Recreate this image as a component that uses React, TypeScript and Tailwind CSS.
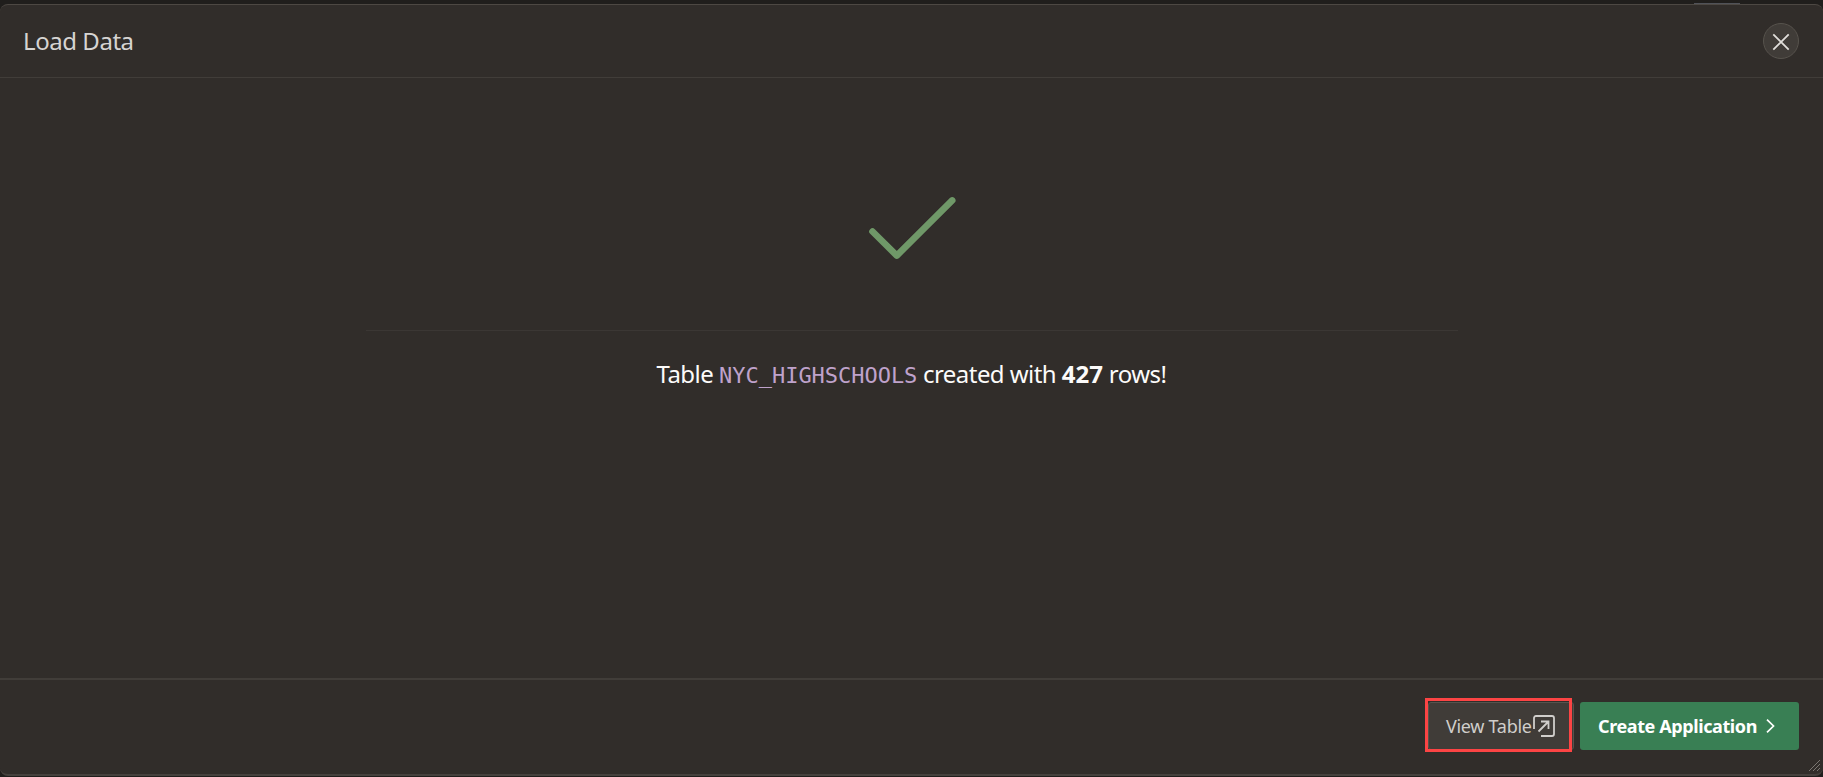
export default function App() {
  return (
    <div className="relative h-[777px] w-[1823px] overflow-hidden bg-[#201e1c] pt-1 pb-px font-['Noto_Sans',sans-serif]">
      <div className="absolute top-[3px] left-[1694px] h-px w-[46px] bg-[#505258]" />
      <section className="flex h-[772px] flex-col overflow-hidden rounded-lg border-t border-b-2 border-t-[#4d4843] border-b-[#45413d] bg-[#312d2a]">
        <header className="flex h-[73px] shrink-0 items-center justify-between border-b border-[#413d39] pr-6 pl-[23px]">
          <h1 className="text-[24px] leading-8 tracking-[-0.45px] text-[#d6d4d2]">Load Data</h1>
          <button className="flex size-9 items-center justify-center rounded-full border border-[#57534d] bg-[#403c38]" aria-label="Close">
            <svg className="translate-y-px" width="18" height="18" viewBox="0 0 18 18" fill="none" stroke="#e0deda" strokeWidth="1.8">
              <path d="M1.3 1.3l15.4 15.4M16.7 1.3l-15.4 15.4" />
            </svg>
          </button>
        </header>
        <main className="flex flex-1 flex-col items-center">
          <svg className="mt-[104px] shrink-0" width="96" height="96" viewBox="864 182 96 96" fill="none" stroke="#6f9868" strokeWidth="6.6" strokeLinecap="round" strokeLinejoin="round">
            <path d="M872.5 231.5L896.8 255.6L952.2 200.4" />
          </svg>
          <div className="mt-[52px] h-px w-[1092px] shrink-0 bg-[#3b3734]" />
          <p className="mt-[27px] flex text-[24px] leading-8 whitespace-pre text-[#fcfbfa]">
            <span className="tracking-[-0.5px]">Table </span>
            <span className="pt-[2px] font-['DejaVu_Sans_Mono',monospace] text-[22px] tracking-[-0.03px] text-[#bfa2cb]">NYC_HIGHSCHOOLS</span>
            <span className="tracking-[-0.55px]"> created with </span>
            <strong>427</strong>
            <span className="tracking-[-0.5px]"> rows!</span>
          </p>
        </main>
        <footer className="relative flex h-[96px] shrink-0 items-start justify-end gap-[6px] border-t-2 border-[#413d39] pt-[22px] pr-6">
          <button className="relative flex h-12 w-[146px] items-center rounded-[3px] border border-[#57534d] bg-[#403c38] pl-[17px] text-left text-[18px] text-[#d0cecb]">
            <span className="w-[87px] shrink-0 tracking-[-0.3px] whitespace-nowrap">View Table</span>
            <svg className="shrink-0" width="22" height="22" viewBox="0 0 22 22" fill="none" stroke="#d0cecb" strokeWidth="1.8">
              <path d="M1 14V3a2 2 0 0 1 2-2h16a2 2 0 0 1 2 2v16a2 2 0 0 1-2 2H8M5.5 16.5L15.5 6.5M8 6.5h7.5V14" />
            </svg>
            <i className="absolute -top-[5px] -left-[4px] h-[54px] w-[147px] border-[3px] border-[#fc4444]" />
          </button>
          <button className="flex h-12 w-[219px] items-center rounded-[3px] bg-[#397f54] pl-[18px] text-left text-[18px] font-bold text-white">
            <span className="w-[168px] shrink-0 tracking-[-0.4px] whitespace-nowrap">Create Application</span>
            <svg width="9" height="14" viewBox="0 0 9 14" fill="none" stroke="currentColor" strokeWidth="1.7">
              <path d="M1 .7L7.5 7L1 13.3" />
            </svg>
          </button>
          <svg className="absolute right-[3px] bottom-[3px]" width="11" height="11" viewBox="0 0 11 11" stroke="#7b7772" strokeWidth="1">
            <path d="M0 11L11 0M4 11L11 4M8 11L11 8" />
          </svg>
        </footer>
      </section>
    </div>
  );
}
